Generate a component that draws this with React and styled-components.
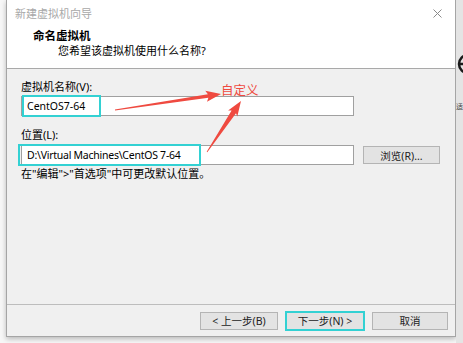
import React from 'react';
import styled, { createGlobalStyle } from 'styled-components';

const Global = createGlobalStyle`
    html, body {
        margin: 0;
        padding: 0;
        background: #f7f7f7;
    }
    body {
        font-family: "Noto Sans", "Noto Sans CJK SC", sans-serif;
        font-size: 11px;
        color: #000;
    }
`;

const CYAN = '#33d1d3';
const RED = '#ef4a40';

const Page = styled.div`
    position: relative;
    width: 463px;
    height: 343px;
    display: flex;
    padding-left: 6px;
    box-sizing: border-box;
    overflow: hidden;
`;

const Dialog = styled.div`
    width: 450px;
    height: 337px;
    box-sizing: border-box;
    border: 1px solid #a5a5a5;
    border-top: none;
    background: #f0f0f0;
    display: flex;
    flex-direction: column;
    box-shadow: 0 2px 5px rgba(0, 0, 0, 0.25);
`;

const Top = styled.div`
    background: #fff;
    height: 68px;
    border-bottom: 1px solid #a9a9a9;
    display: flex;
    flex-direction: column;
`;

const TitleBar = styled.div`
    height: 26px;
    display: flex;
    align-items: center;
    justify-content: space-between;
    padding: 0 8px 2px 8px;
    color: #a8a8a8;
    font-size: 11px;
`;

const Close = styled.svg`
    width: 9px;
    height: 9px;
    margin-right: 5px;
`;

const Header = styled.div`
    padding-left: 26px;
    display: flex;
    flex-direction: column;
    line-height: 15px;
`;

const HeaderTitle = styled.div`
    font-weight: bold;
    font-size: 11.5px;
`;

const HeaderSub = styled.div`
    padding-left: 25px;
    font-size: 11px;
`;

const Body = styled.div`
    flex: 1;
    padding: 10px 0 0 14px;
    display: flex;
    flex-direction: column;
`;

const Label = styled.div`
    line-height: 16px;
    margin-bottom: ${p => p.gap || 0}px;
`;

const Row = styled.div`
    display: flex;
    align-items: center;
    gap: 9px;
`;

const Field = styled.div`
    position: relative;
    width: 333px;
    height: 20px;
    box-sizing: border-box;
    border: 1px solid #a0a0a0;
    background: #fff;
    display: flex;
    align-items: center;
    padding-left: 5px;
    margin-bottom: ${p => p.gap || 0}px;
    font-size: 10.5px;
    letter-spacing: ${p => p.tight ? -0.25 : 0}px;
`;

const Highlight = styled.div`
    position: absolute;
    top: -2px;
    bottom: -2px;
    left: ${p => p.left}px;
    width: ${p => p.width}px;
    border: 2px solid ${CYAN};
    box-sizing: border-box;
`;

const Button = styled.div`
    position: relative;
    width: ${p => p.width || 78}px;
    height: 18px;
    box-sizing: border-box;
    border: 1px solid #b4b4b4;
    background: #e3e3e3;
    display: flex;
    align-items: center;
    justify-content: center;
    font-size: 10.5px;
    color: #222;
`;

const ButtonRing = styled.div`
    position: absolute;
    inset: -2px;
    border: 2px solid ${CYAN};
`;

const Hint = styled.div`
    margin-top: 1px;
    line-height: 16px;
`;

const Footer = styled.div`
    height: 31px;
    border-top: 1px solid #bdbdbd;
    display: flex;
    align-items: center;
    justify-content: flex-end;
    gap: 8px;
    padding: 0 7px 0 0;
`;

const Desktop = styled.div`
    flex: 1;
    background: #e4e4e4;
    display: flex;
    flex-direction: column;
    padding-top: 53px;
    overflow: hidden;
`;

const DesktopLabel = styled.div`
    margin-top: 24px;
    font-size: 7px;
    color: #444;
`;

const Annotations = styled.svg`
    position: absolute;
    left: 0;
    top: 0;
    width: 463px;
    height: 343px;
    pointer-events: none;
`;

const Note = styled.text`
    font-family: "Noto Sans CJK SC", sans-serif;
    font-size: 12.5px;
    fill: ${RED};
`;

// tapered hand-drawn style arrow, thin tail to fat head
function arrowPoints([x1, y1], [x2, y2], fat = 2) {
    const dx = x2 - x1, dy = y2 - y1;
    const len = Math.hypot(dx, dy);
    const ux = dx / len, uy = dy / len;
    const nx = -uy, ny = ux;
    const headLen = 13, headW = 5.5, tailW = 0.4;
    const bx = x2 - ux * headLen, by = y2 - uy * headLen;
    const pts = [
        [x1 + nx * tailW, y1 + ny * tailW],
        [bx + nx * fat, by + ny * fat],
        [bx + nx * headW - ux * 2, by + ny * headW - uy * 2],
        [x2, y2],
        [bx - nx * headW - ux * 2, by - ny * headW - uy * 2],
        [bx - nx * fat, by - ny * fat],
        [x1 - nx * tailW, y1 - ny * tailW],
    ];
    return pts.map(p => p.map(v => v.toFixed(1)).join(',')).join(' ');
}

export default function App() {
    return (
        <Page>
            <Global />
            <Dialog>
                <Top>
                    <TitleBar>
                        <span>新建虚拟机向导</span>
                        <Close viewBox="0 0 9 9">
                            <path d="M0.5 0.5 L8.5 8.5 M8.5 0.5 L0.5 8.5" stroke="#8a8a8a" strokeWidth="1" />
                        </Close>
                    </TitleBar>
                    <Header>
                        <HeaderTitle>命名虚拟机</HeaderTitle>
                        <HeaderSub>您希望该虚拟机使用什么名称?</HeaderSub>
                    </Header>
                </Top>

                <Body>
                    <Label gap={1}>虚拟机名称(V):</Label>
                    <Field gap={11}>
                        CentOS7-64
                        <Highlight left={0} width={79} />
                    </Field>

                    <Label gap={2}>位置(L):</Label>
                    <Row>
                        <Field tight>
                            D:\Virtual Machines\CentOS 7-64
                            <Highlight left={-4} width={183} />
                        </Field>
                        <Button width={77}>浏览(R)...</Button>
                    </Row>
                    <Hint>在"编辑"&gt;"首选项"中可更改默认位置。</Hint>
                </Body>

                <Footer>
                    <Button>&lt; 上一步(B)</Button>
                    <Button>
                        下一步(N) &gt;
                        <ButtonRing />
                    </Button>
                    <Button width={76}>取消</Button>
                </Footer>
            </Dialog>

            <Desktop>
                <svg width="20" height="24" viewBox="0 0 20 24">
                    <circle cx="12" cy="11" r="9" fill="none" stroke="#1a1a1a" strokeWidth="2.5" />
                    <path d="M3 11 H20" stroke="#1a1a1a" strokeWidth="2.5" />
                </svg>
                <DesktopLabel>适</DesktopLabel>
            </Desktop>

            <Annotations viewBox="0 0 463 343">
                <Note x="221" y="95">自定义</Note>
                <polygon points={arrowPoints([115, 110], [221, 94], 1.8)} fill={RED} />
                <polygon points={arrowPoints([207, 152], [241, 101], 2.6)} fill={RED} />
            </Annotations>
        </Page>
    );
}
